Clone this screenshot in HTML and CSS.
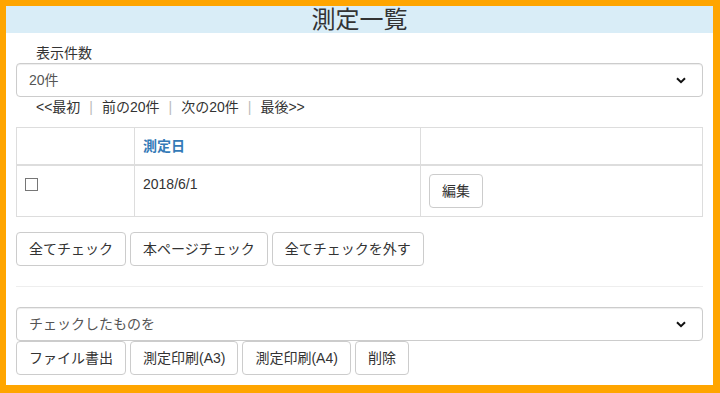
FILE: index.html
```html
<!doctype html>
<html>
<head>
	<meta charset="utf-8">
	<title>測定一覧</title>
	<link rel="stylesheet" href="styles.css">
</head>
<body>
	<div class="page">
		<!-- タイトル -->
		<h1 class="title">測定一覧</h1>

		<!-- 表示件数 -->
		<label class="label">表示件数</label>
		<div class="select-box">
			<select class="form-control">
				<option>20件</option>
				<option>50件</option>
				<option>100件</option>
			</select>
			<svg class="caret" width="10" height="7" viewBox="0 0 10 7"><path d="M1 1.2 5 5.2 9 1.2" fill="none" stroke="#111" stroke-width="2"/></svg>
		</div>

		<!-- ページ送り -->
		<div class="pager">
			<a>&lt;&lt;最初</a><span class="sep">|</span><a>前の20件</a><span class="sep">|</span><a>次の20件</a><span class="sep">|</span><a>最後&gt;&gt;</a>
		</div>

		<!-- 一覧 -->
		<table class="list">
			<thead>
				<tr>
					<th class="col-check"></th>
					<th class="col-date">測定日</th>
					<th></th>
				</tr>
			</thead>
			<tbody>
				<tr>
					<td><input type="checkbox" class="check"></td>
					<td>2018/6/1</td>
					<td><button class="btn">編集</button></td>
				</tr>
			</tbody>
		</table>

		<div class="btn-row check-row">
			<button class="btn">全てチェック</button>
			<button class="btn">本ページチェック</button>
			<button class="btn">全てチェックを外す</button>
		</div>

		<hr class="line">

		<!-- 一括操作 -->
		<div class="select-box">
			<select class="form-control">
				<option>チェックしたものを</option>
			</select>
			<svg class="caret" width="10" height="7" viewBox="0 0 10 7"><path d="M1 1.2 5 5.2 9 1.2" fill="none" stroke="#111" stroke-width="2"/></svg>
		</div>
		<div class="btn-row">
			<button class="btn">ファイル書出</button>
			<button class="btn">測定印刷(A3)</button>
			<button class="btn">測定印刷(A4)</button>
			<button class="btn">削除</button>
		</div>
	</div>
</body>
</html>
```

FILE: styles.css
```css
html,body{margin:0;padding:0;}
body{
	background-color:#ffa500;
	font-family:"Liberation Sans","Noto Sans CJK JP",sans-serif;
	font-size:14px;
	line-height:20px;
	color:#333;
}
/* 白い枠 */
.page{
	background-color:#fff;
	margin:6px 7px 8px 6px;
	padding:0 10px 10px;
}
/* タイトル */
.title{
	margin:0 -10px;
	height:27px;
	line-height:27px;
	background-color:#d9edf7;
	text-align:center;
	font-size:24px;
	font-weight:normal;
	color:#333;
}
.label{
	display:block;
	margin-top:10px;
	padding-left:20px;
}
/* セレクト */
.select-box{
	position:relative;
}
.form-control{
	display:block;
	width:100%;
	height:34px;
	padding:6px 12px;
	font-family:inherit;
	font-size:14px;
	color:#555;
	background-color:#fff;
	border:1px solid #ccc;
	border-radius:4px;
	box-shadow:inset 0 1px 1px rgba(0,0,0,.075);
	-webkit-appearance:none;
	appearance:none;
	margin:0;
}
.caret{
	position:absolute;
	right:17px;
	top:14px;
	pointer-events:none;
}
/* ページ送り */
.pager{
	padding-left:20px;
	height:20px;
}
.pager a{color:#333;}
.pager .sep{
	color:#bbb;
	padding:0 9px;
}
/* 一覧 */
.list{
	width:100%;
	margin-top:10px;
	border-collapse:collapse;
	border:1px solid #ddd;
}
.list th,.list td{
	border:1px solid #ddd;
	padding:8px;
	text-align:left;
	vertical-align:top;
}
.list th{
	color:#337ab7;
	font-weight:bold;
	border-bottom-width:2px;
	height:20px;
}
.col-check{width:101px;}
.col-date{width:269px;}
.check{
	-webkit-appearance:none;
	appearance:none;
	width:13px;
	height:13px;
	margin:4px 0 0;
	border:1px solid #767676;
	border-radius:0;
	display:block;
}
/* ボタン */
.btn{
	display:inline-block;
	height:34px;
	padding:6px 12px;
	font-family:inherit;
	font-size:14px;
	line-height:20px;
	color:#333;
	background-color:#fff;
	border:1px solid #ccc;
	border-radius:4px;
	margin:0;
}
.btn-row{
	display:flex;
	gap:4px;
}
.check-row{margin-top:15px;}
.line{
	margin:20px 0;
	border:0;
	border-top:1px solid #eee;
}
```
